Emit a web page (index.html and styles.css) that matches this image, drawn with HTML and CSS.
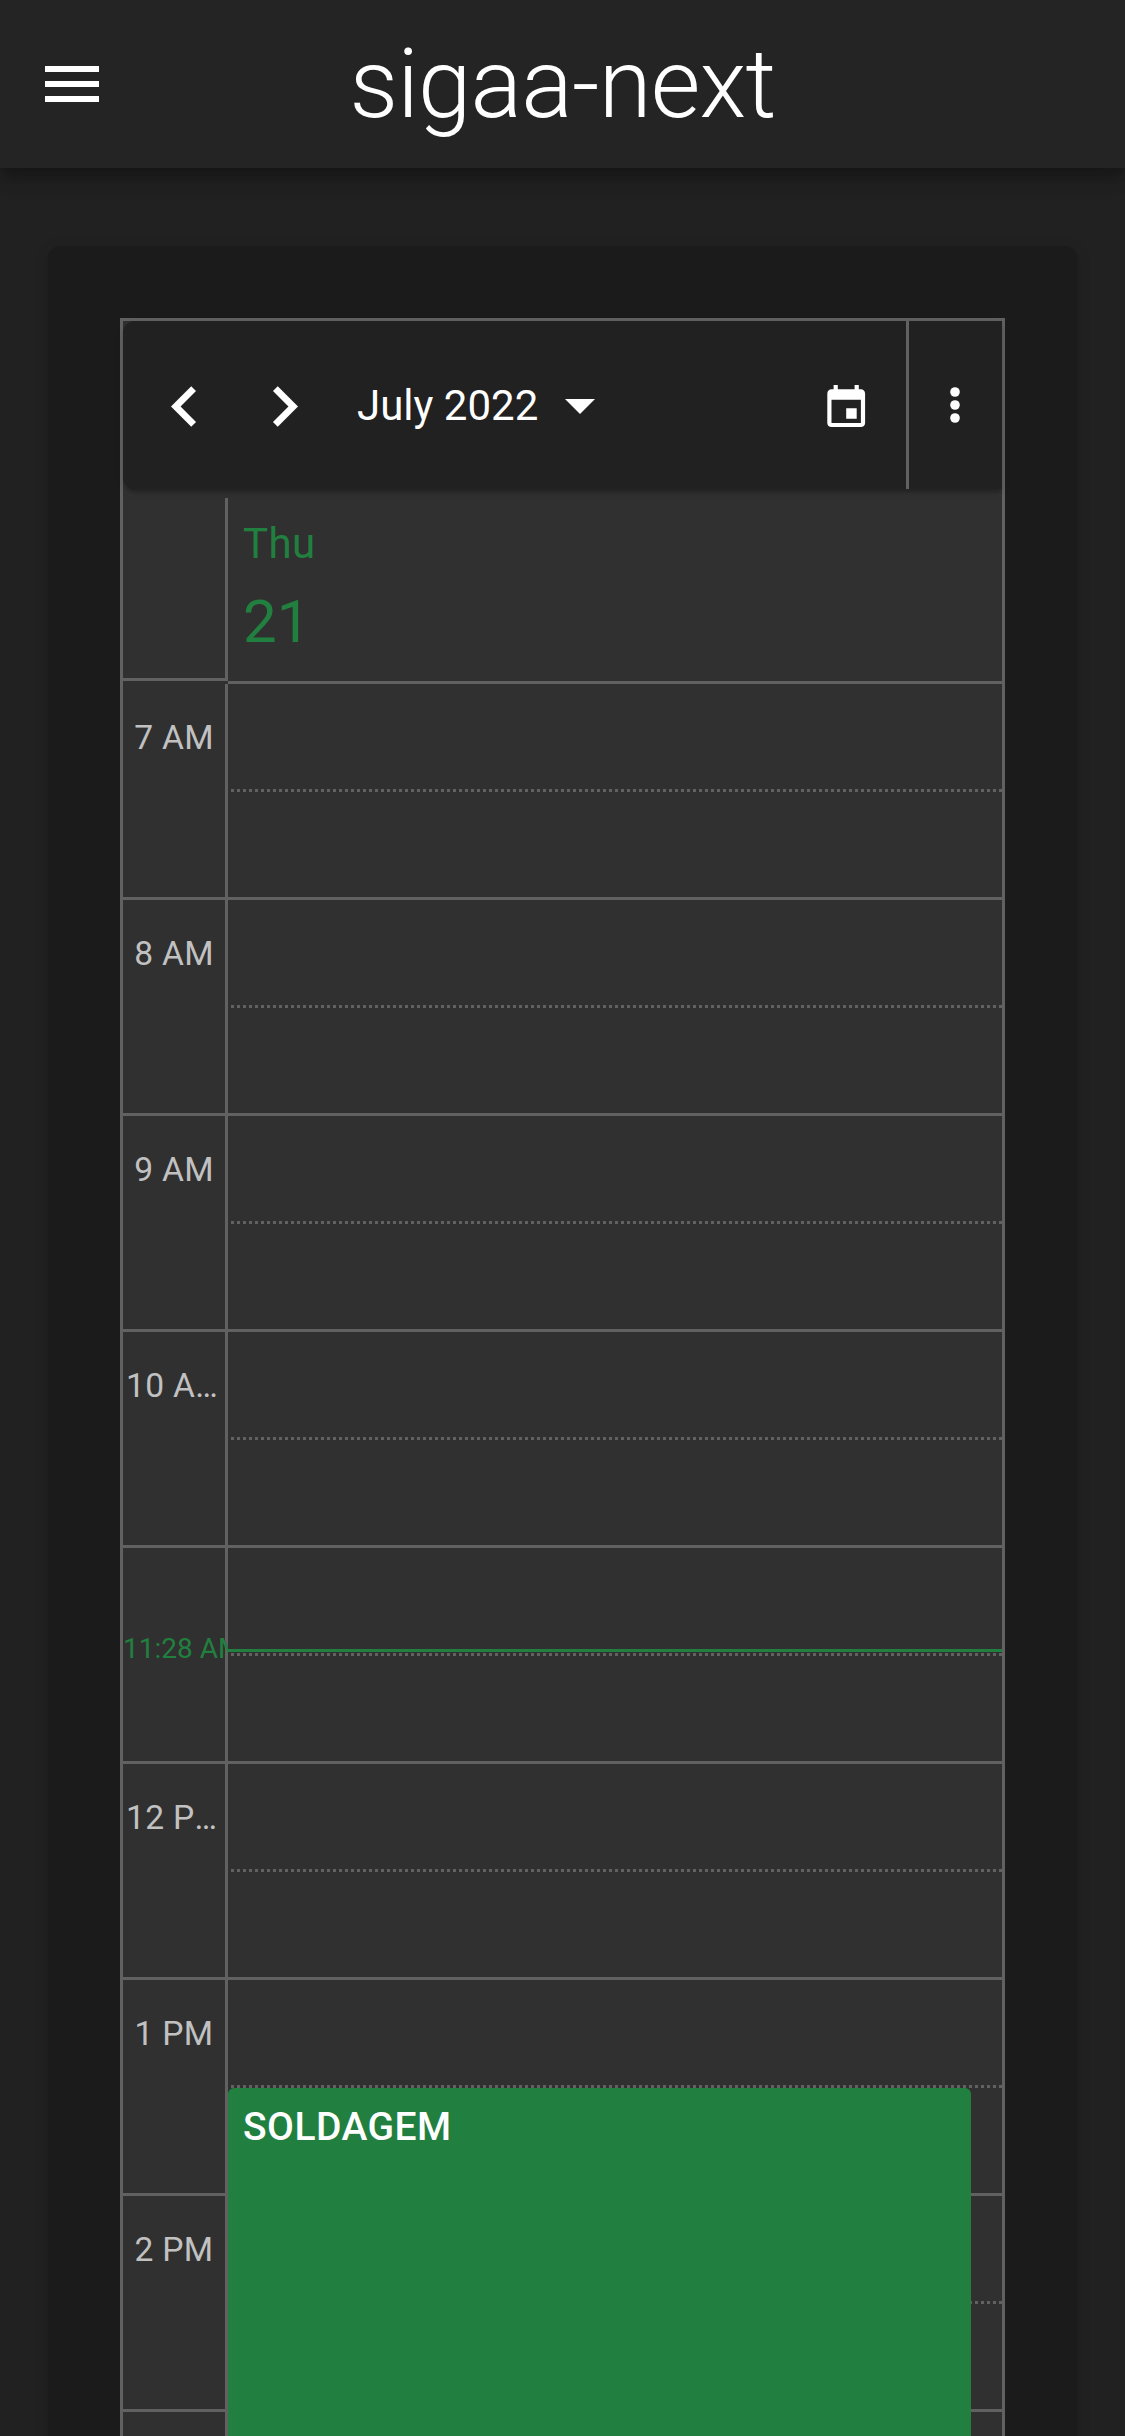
FILE: index.html
```html
<!DOCTYPE html>
<html lang="en">
<head>
<meta charset="utf-8">
<title>sigaa-next</title>
<link rel="stylesheet" href="styles.css">
</head>
<body>
<header class="appbar">
  <svg class="menu" viewBox="0 0 24 24"><path d="M3 18h18v-2H3v2zm0-5h18v-2H3v2zm0-7v2h18V6H3z"/></svg>
  <h1 class="title">sigaa-next</h1>
</header>
<main class="card">
  <section class="calendar">
    <div class="toolbar">
      <svg class="chevron" viewBox="0 0 24 24"><path d="M15.41 7.41 14 6l-6 6 6 6 1.41-1.41L10.83 12z"/></svg>
      <svg class="chevron next" viewBox="0 0 24 24"><path d="M10 6 8.59 7.41 13.17 12l-4.58 4.59L10 18l6-6z"/></svg>
      <span class="month">July 2022</span>
      <svg class="arrow" viewBox="0 0 24 24"><path d="m7 10 5 5 5-5z"/></svg>
      <svg class="today" viewBox="0 0 24 24"><path d="M17 12h-5v5h5v-5zM16 1v2H8V1H6v2H5c-1.11 0-1.99.9-1.99 2L3 19c0 1.1.89 2 2 2h14c1.1 0 2-.9 2-2V5c0-1.1-.9-2-2-2h-1V1h-2zm3 18H5V8h14v11z"/></svg>
      <div class="more">
        <svg class="dots" viewBox="0 0 10 36"><circle cx="5" cy="5" r="4.8"/><circle cx="5" cy="18" r="4.8"/><circle cx="5" cy="31" r="4.8"/></svg>
      </div>
    </div>
    <div class="dayhead">
      <div class="corner"></div>
      <div class="day"><span class="weekday">Thu</span><span class="date">21</span></div>
    </div>
    <div class="grid">
      <div class="hour"><div class="time">7 AM</div><div class="slot"></div></div>
      <div class="hour"><div class="time">8 AM</div><div class="slot"></div></div>
      <div class="hour"><div class="time">9 AM</div><div class="slot"></div></div>
      <div class="hour"><div class="time clipped">10 A…</div><div class="slot"></div></div>
      <div class="hour"><div class="time"></div><div class="slot"></div></div>
      <div class="hour"><div class="time clipped">12 P…</div><div class="slot"></div></div>
      <div class="hour"><div class="time">1 PM</div><div class="slot"></div></div>
      <div class="hour"><div class="time">2 PM</div><div class="slot"></div></div>
      <div class="hour"><div class="time"></div><div class="slot"></div></div>
      <div class="now-label">11:28 AM</div>
      <div class="now-line"></div>
      <div class="event">SOLDAGEM</div>
    </div>
  </section>
</main>
</body>
</html>
```
FILE: styles.css
```css
* { box-sizing: border-box; }
html, body { height: 2436px; overflow: hidden; }
body {
  margin: 0;
  background: #212121;
  color: #fff;
  font-family: Roboto, sans-serif;
}
svg { display: block; flex: none; fill: #fff; }

.appbar {
  position: relative;
  display: grid;
  grid-template-columns: 108px 1fr 108px;
  align-items: center;
  height: 168px;
  background: #242424;
  box-shadow: 0 6px 12px -3px rgba(0,0,0,.2), 0 12px 15px 0 rgba(0,0,0,.14), 0 3px 30px 0 rgba(0,0,0,.12);
}
.menu { width: 72px; height: 72px; margin-left: 36px; }
.title {
  margin: 0;
  text-align: center;
  font-size: 96px;
  font-weight: 300;
  line-height: 112px;
  letter-spacing: -0.8px;
}

.card {
  height: 2300px;
  margin: 78px 48px 0;
  padding: 72px;
  border-radius: 12px;
  background: #1b1b1b;
  box-shadow: 0 6px 3px -3px rgba(0,0,0,.12), 0 3px 3px 0 rgba(0,0,0,.08), 0 3px 15px 0 rgba(0,0,0,.12);
}
.calendar {
  border: 3px solid #616161;
  background: #303030;
}
.toolbar {
  position: relative;
  display: flex;
  align-items: center;
  height: 168px;
  padding-left: 21px;
  border-radius: 12px 0 0 12px;
  background: #212121;
  box-shadow: 0 6px 3px -3px rgba(0,0,0,.12), 0 3px 3px 0 rgba(0,0,0,.08), 0 3px 9px 0 rgba(0,0,0,.1);
}
.chevron { width: 81px; height: 81px; margin-top: 2px; }
.next { margin-left: 19px; }
.month { margin: 2px 0 0 32px; font-size: 42px; line-height: 60px; white-space: nowrap; }
.arrow { width: 72px; height: 72px; margin-left: 6px; }
.today { width: 50.4px; height: 50.4px; margin: 6px 0 0 auto; }
.more {
  display: flex;
  align-items: center;
  width: 96px;
  height: 168px;
  margin-left: 35px;
  padding-left: 41px;
  border-left: 3px solid #616161;
}
.dots { width: 10px; height: 36px; }

.dayhead {
  display: grid;
  grid-template-columns: 105px 1fr;
  height: 195px;
}
.corner {
  height: 183px;
  margin-top: 9px;
  border-right: 3px solid #616161;
  border-bottom: 3px solid #616161;
}
.day {
  display: flex;
  flex-direction: column;
  padding: 25px 15px 0;
  border-bottom: 3px solid #616161;
  color: #21803f;
}
.weekday { font-size: 42px; line-height: 60px; letter-spacing: .4px; }
.date { margin-top: 9px; font-size: 60px; line-height: 78px; }

.grid { position: relative; height: 1752px; overflow: hidden; }
.hour {
  display: grid;
  grid-template-columns: 105px 1fr;
  height: 216px;
}
.time {
  padding-top: 33px;
  border-right: 3px solid #616161;
  border-bottom: 3px solid #616161;
  color: #c1c1c1;
  font-size: 33.6px;
  line-height: 42px;
  letter-spacing: .3px;
  text-align: center;
  white-space: nowrap;
}
.clipped { padding-left: 3px; text-align: left; font-kerning: none; }
.slot {
  border-bottom: 3px solid #616161;
  background: repeating-linear-gradient(90deg, transparent 0 3px, #616161 3px 6px) 0 105px / 100% 3px no-repeat;
}
.now-label {
  position: absolute;
  top: 945px;
  left: 0;
  width: 105px;
  overflow: hidden;
  color: #21803f;
  font-size: 28px;
  line-height: 40px;
  white-space: nowrap;
}
.now-line {
  position: absolute;
  top: 965px;
  left: 105px;
  right: 0;
  height: 3px;
  background: #21803f;
}
.event {
  position: absolute;
  top: 1404px;
  left: 105px;
  width: 743px;
  height: 500px;
  padding: 16px 15px;
  border-radius: 6px;
  background: #21803f;
  font-size: 39px;
  font-weight: 500;
  line-height: 46px;
  letter-spacing: .45px;
}
```
